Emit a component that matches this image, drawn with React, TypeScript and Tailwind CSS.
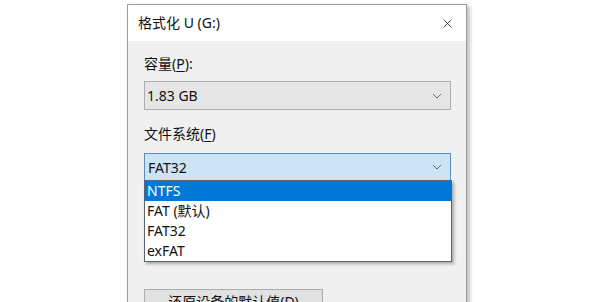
import { X } from "lucide-react";

const font = { fontFamily: '"Noto Sans", "Noto Sans CJK SC", sans-serif' };

function Chevron() {
  return (
    <svg width="10" height="6" viewBox="0 0 10 6" className="shrink-0">
      <path d="M1 1 L5 5 L9 1" fill="none" stroke="#6b6b6b" strokeWidth="1" />
    </svg>
  );
}

const options = ["NTFS", "FAT (默认)", "FAT32", "exFAT"];

export default function App() {
  return (
    <div
      className="w-[608px] h-[302px] overflow-hidden bg-white text-[14px] text-[#111]"
      style={font}
    >
      <div className="ml-[127px] mt-[4px] w-[340px] h-[320px] border border-[#9a9a9a] bg-[#f0f0f0] shadow-[3px_2px_4px_rgba(0,0,0,0.25)]">
        <div className="h-[36px] bg-white flex items-center justify-between pl-[10px] pr-[11px]">
          <span className="leading-none">格式化 U (G:)</span>
          <X size={15} strokeWidth={1.3} className="text-[#222]" />
        </div>

        <div className="pl-[16px] pr-[15px] pt-[13px]">
          <div className="h-[20px] leading-[20px]">
            容量(<span className="underline underline-offset-2">P</span>):
          </div>
          <div className="mt-[7px] h-[29px] border border-[#adadad] bg-[#e5e5e5] flex items-center justify-between pl-[2px] pr-[8px]">
            <span>1.83 GB</span>
            <Chevron />
          </div>

          <div className="mt-[14px] h-[20px] leading-[20px]">
            文件系统(<span className="underline underline-offset-2">F</span>)
          </div>
          <div className="relative mt-[9px]">
            <div className="h-[28px] border border-[#5f8fb8] bg-[#cce4f7] flex items-center justify-between pl-[3px] pr-[8px]">
              <span>FAT32</span>
              <Chevron />
            </div>
            <div className="absolute left-0 right-[-1px] top-[27px] z-10 border border-[#5a6470] bg-white shadow-[2px_2px_3px_rgba(0,0,0,0.3)]">
              {options.map((o, i) => (
                <div
                  key={o}
                  className={
                    i === 0
                      ? "h-[20px] leading-[20px] pl-[2px] bg-[#0078d7] text-white"
                      : "h-[20px] leading-[20px] pl-[2px]"
                  }
                >
                  {o}
                </div>
              ))}
            </div>
          </div>

          <div className="mt-[108px] w-[179px] h-[24px] border border-[#adadad] bg-[#e1e1e1] flex items-center justify-center">
            还原设备的默认值(<span className="underline underline-offset-2">D</span>)
          </div>
        </div>
      </div>
    </div>
  );
}
